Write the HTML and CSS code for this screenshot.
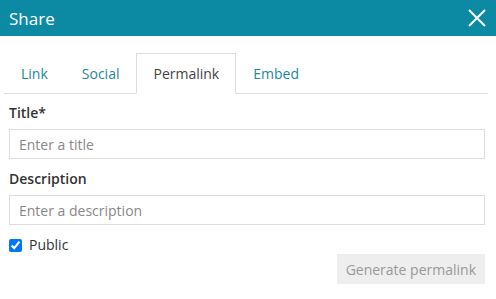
FILE: index.html
```html
<!DOCTYPE html>
<html lang="en">
<head>
  <meta charset="UTF-8">
  <meta name="viewport" content="width=device-width, initial-scale=1.0">
  <title>Share</title>
  <link rel="stylesheet" href="styles.css">
</head>
<body>
  <div class="dialog">
    <div class="dialog-header">
      <h2>Share</h2>
      <button class="close" aria-label="Close">
        <svg width="18" height="18" viewBox="0 0 18 18"><path d="M1 1 L17 17 M17 1 L1 17" stroke="#fff" stroke-width="2" fill="none"/></svg>
      </button>
    </div>

    <ul class="tabs">
      <li><a href="#">Link</a></li>
      <li><a href="#">Social</a></li>
      <li class="active"><a href="#">Permalink</a></li>
      <li><a href="#">Embed</a></li>
    </ul>

    <form class="form">
      <label for="title">Title*</label>
      <input type="text" id="title" placeholder="Enter a title">
      <label for="description">Description</label>
      <input type="text" id="description" placeholder="Enter a description">
      <label class="check"><input type="checkbox" checked> Public</label>
      <div class="actions">
        <button type="button" class="generate" disabled>Generate permalink</button>
      </div>
    </form>
  </div>
</body>
</html>
```

FILE: styles.css
```css
* {
  margin: 0;
  padding: 0;
  box-sizing: border-box;
  font-family: 'Open Sans', sans-serif;
}
body {
  background: #fff;
  width: 496px;
}
.dialog-header {
  height: 36px;
  background-color: #0c8aa3;
  display: flex;
  align-items: center;
  justify-content: space-between;
  padding: 0 10px 0 9px;
}
.dialog-header h2 {
  color: #fff;
  font-size: 17px;
  font-weight: 400;
}
.close {
  background: none;
  border: none;
  width: 18px;
  height: 18px;
  display: flex;
}
.tabs {
  list-style: none;
  display: flex;
  margin: 17px 8px 0 4px;
  border-bottom: 1px solid #ddd;
}
.tabs li {
  margin-bottom: -1px;
  border: 1px solid transparent;
}
.tabs a {
  display: block;
  padding: 0 16px;
  line-height: 39px;
  font-size: 14px;
  color: #25879b;
  text-decoration: none;
}
.tabs li.active {
  border-color: #ddd;
  border-bottom-color: #fff;
  background: #fff;
}
.tabs li.active a {
  color: #444;
}
.form {
  display: flex;
  flex-direction: column;
  padding: 9px 11px 0 9px;
}
.form label {
  font-size: 14px;
  font-weight: 600;
  color: #333;
  line-height: 20px;
  margin-bottom: 6px;
}
.form input[type="text"] {
  height: 30px;
  border: 1px solid #ddd;
  padding: 0 9px;
  font-size: 14px;
  color: #333;
  margin-bottom: 10px;
}
.form input::placeholder {
  color: #888;
}
.form .check {
  display: flex;
  align-items: center;
  gap: 7px;
  font-weight: 400;
  margin: 0;
}
.check input {
  width: 13px;
  height: 13px;
  margin: 0;
}
.actions {
  display: flex;
  justify-content: flex-end;
  margin-top: -1px;
}
.generate {
  background: #eee;
  border: none;
  color: #999;
  font-size: 14px;
  padding: 0 9px;
  height: 30px;
}
```
